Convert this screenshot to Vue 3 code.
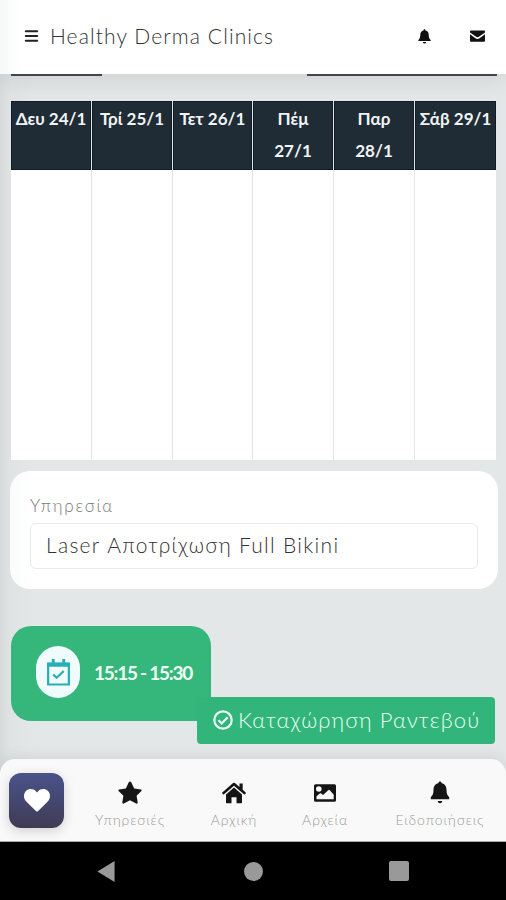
<script setup>
const days = ['Δευ 24/1', 'Τρί 25/1', 'Τετ 26/1', 'Πέμ 27/1', 'Παρ 28/1', 'Σάβ 29/1']
</script>

<template>
  <div class="screen">
    <header class="topbar">
      <svg class="menu" viewBox="0 0 13 13"><path d="M.8 1.2h11.4M.8 6h11.4M.8 10.800h11.4" /></svg>
      <h1>Healthy Derma Clinics</h1>
      <svg class="top-bell" viewBox="0 0 20 22"><path d="M10 0c1 0 1.500.7 1.500 1.700C15 2.500 16.500 5 16.500 8.500c0 4.500 1.500 6 3 8v1.500H.5v-1.500c1.500-2 3-3.500 3-8C3.500 5 5 2.500 8.500 1.700 8.500.7 9 0 10 0zM7.500 19.300h5c-.5 3.300-4.500 3.300-5 0z" /></svg>
      <svg class="mail" viewBox="0 0 16 12"><path d="M1 0h14Q16 0 16 1v1.200L9.500 6.800Q8 7.700 6.500 6.800L0 2.200V1Q0 0 1 0zM0 4.200l5.800 4.200q2.200 1.500 4.400 0L16 4.200V11q0 1-1 1H1Q0 12 0 11z" /></svg>
    </header>

    <main>
      <div class="rules"><i class="rule-left"></i><i class="rule-right"></i></div>

      <div class="calendar">
        <div v-for="day in days" :key="day" class="day">
          <div class="day-head"><span>{{ day }}</span></div>
        </div>
      </div>

      <section class="service">
        <label>Υπηρεσία</label>
        <div class="field">Laser Αποτρίχωση Full Bikini</div>
      </section>

      <section class="booking">
        <div class="slot">
          <span class="slot-icon">
            <svg viewBox="0 0 24 28"><path class="line" d="M1.200 5h21.600v21.500H1.200zM6.500 16l3.500 3.500 7.500-7" /><path class="solid" d="M0 4.500Q0 3.500 1 3.500h22q1 0 1 1V8H0zM5 0h3v5H5zM16 0h3v5h-3z" /></svg>
          </span>
          <span class="slot-time">15:15 - 15:30</span>
        </div>
        <button class="submit">
          <svg viewBox="0 0 20 20"><circle cx="10" cy="10" r="8.700" /><path d="M5.500 10.300l3.200 3.100 6-6.200" /></svg>
          <span>Καταχώρηση Ραντεβού</span>
        </button>
      </section>
    </main>

    <nav class="tabs">
      <div class="heart">
        <svg viewBox="0 0 26 23"><path d="M13 22.500q-.6 0-1.100-.5L2 12.200C-.7 9.400-.6 4.500 2 2c3-2.800 7.500-2.300 10 .4l1 1 1-1C16.500-.3 21-.8 24 2c2.600 2.500 2.700 7.400 0 10.200L14.100 22q-.5.500-1.100.5z" /></svg>
      </div>
      <div class="tab services">
        <svg viewBox="0 0 24 24"><path d="M12 .5q.8 0 1.200.8l3 6.100 6.600 1q1.600.4.600 1.700l-4.800 4.700 1.100 6.700q0 1.500-1.500 1L12 19.300l-6.200 3.200q-1.500.5-1.500-1l1.100-6.700L.6 10.100q-1-1.300.6-1.700l6.600-1 3-6.100q.4-.8 1.200-.8z" /></svg>
        <span>Υπηρεσιές</span>
      </div>
      <div class="tab home">
        <svg viewBox="0 0 24 22"><path d="M12 .8q.8 0 1.500.6L17.500 5V1.500h3.200v6.300l3 2.600q.5.500 0 1l-.8.900q-.5.500-1 0L12 3.700 2.100 12.300q-.5.500-1 0l-.8-.9q-.5-.5 0-1l10.200-9Q11.200.8 12 .8zM12 5.600l8 7V20.500q0 .8-.8.800H14.500v-6h-5v6H4.800q-.8 0-.8-.8v-7.900z" /></svg>
        <span>Αρχική</span>
      </div>
      <div class="tab files">
        <svg viewBox="0 0 24 24"><path fill-rule="evenodd" d="M2.500 3.200h19q1.500 0 1.500 1.600v14.400q0 1.600-1.500 1.600h-19Q1 20.800 1 19.200V4.800q0-1.600 1.500-1.600zM5.800 5.200a2.800 2.800 0 1 0 0 5.600 2.800 2.800 0 0 0 0-5.600zM3.500 18.200h17.200v-4.400l-3.900-4.600q-.8-.7-1.600 0l-5.100 4.900-2-1.700q-.7-.5-1.400 0l-3.200 2.900z" /></svg>
        <span>Αρχεία</span>
      </div>
      <div class="tab alerts">
        <svg viewBox="0 0 22 24"><path d="M11 .5c1 0 1.500.7 1.500 1.500 3.500.8 5 3.600 5 7.100 0 4 1 5.400 2.700 7.100v2H1.800v-2c1.700-1.700 2.700-3.100 2.700-7.100 0-3.500 1.500-6.300 5-7.100 0-.8.500-1.500 1.500-1.500zM8.700 20h4.600c-.5 3-4.100 3-4.600 0z" /></svg>
        <span>Ειδοποιήσεις</span>
      </div>
    </nav>

    <footer class="system">
      <svg class="back" viewBox="0 0 18 22"><path d="M18 0v22L0 11z" /></svg>
      <i class="circle"></i>
      <i class="square"></i>
    </footer>
  </div>
</template>

<style>
body { margin: 0; }
</style>

<style scoped>
* { box-sizing: border-box; }
.screen {
  width: 506px;
  height: 900px;
  display: flex;
  flex-direction: column;
  overflow: hidden;
  font-family: Lato, "Noto Sans", sans-serif;
  font-weight: 300;
  background: linear-gradient(90deg, #d5dada 0, #dfe3e3 10px, #e3e7e7 35px, #e3e7e7 100%);
}
svg { display: block; flex: none; overflow: visible; }
.topbar {
  height: 74px;
  flex: none;
  display: flex;
  align-items: center;
  padding: 0 21px 2px 25px;
  background: linear-gradient(90deg, #f7f8f8, #fff 20px);
  box-shadow: 0 2px 26px rgba(0, 0, 0, .12);
}
.menu { width: 13px; height: 13px; stroke: #222; stroke-width: 2; stroke-linecap: round; }
h1 { margin: 0 auto 0 12px; font-size: 21px; font-weight: 300; line-height: 30px; color: #333; letter-spacing: 1.1px; white-space: nowrap; }
.top-bell { width: 13px; height: 15px; margin-right: 39px; fill: #111; }
.mail { width: 15px; height: 12px; fill: #111; }
main { flex: 1; min-height: 0; padding: 0 8px 0 10px; }
.rules { display: flex; justify-content: space-between; height: 27px; padding: 0 1px; }
.rules i { height: 2px; background: #41464b; }
.rule-left { width: 91px; }
.rule-right { width: 190px; }
.calendar { width: 486px; height: 359px; margin-left: 1px; display: grid; grid-template-columns: 81px 81px 80px 81px 81px 82px; background: #fff; }
.day { border-right: 1px solid #e2e4e5; }
.day-head {
  height: 69px;
  padding-top: 1px;
  border: 1px solid #101c28;
  background: #1f2c36;
  color: #f1f4f5;
  display: flex;
  justify-content: center;
  font-size: 17px;
  font-weight: 700;
  line-height: 32px;
  text-align: center;
  white-space: nowrap;
}
.day:nth-child(4) span, .day:nth-child(5) span { width: 45px; white-space: normal; }
.service { height: 118px; margin-top: 11px; padding: 24px 20px 0; border-radius: 20px; background: linear-gradient(90deg, #fafbfb, #fff 20px); }
label { display: block; height: 28px; line-height: 22px; font-size: 17px; color: #777; letter-spacing: 1.800px; }
.field { height: 46px; padding-left: 15px; border: 1px solid #e7e9ea; border-radius: 6px; line-height: 42px; font-size: 21px; color: #333; letter-spacing: 1.300px; white-space: nowrap; }
.booking { margin-top: 37px; padding-left: 1px; display: flex; flex-direction: column; }
.slot { width: 200px; height: 95px; border-radius: 20px 20px 0 20px; background: #35b67b; display: flex; align-items: center; padding: 0 0 3px 25px; gap: 14px; }
.slot-icon { width: 44px; height: 52px; border-radius: 22px; background: #f0fcfb; display: grid; place-items: center; }
.slot-icon svg { width: 23px; height: 27px; }
.line { fill: none; stroke: #28afb5; stroke-width: 2.300; }
.solid { fill: #28afb5; }
.slot-time { color: #effff6; font-size: 19px; font-weight: 700; letter-spacing: -1.250px; white-space: nowrap; }
.submit { align-self: flex-end; width: 298px; height: 47px; margin: -24px 3px 0 0; padding: 0 0 2px 16px; border: 0; border-radius: 4px; background: #32b57a; color: #eafff5; display: flex; align-items: center; gap: 5px; font-family: inherit; font-weight: 300; font-size: 22px; letter-spacing: 1.100px; white-space: nowrap; }
.submit svg { width: 20px; height: 20px; fill: none; stroke: #eafff5; stroke-width: 2.200; }
.tabs { position: relative; height: 83px; flex: none; border-radius: 15px 15px 0 0; border-bottom: 1px solid #aaa; background: #f9f9f9; box-shadow: 0 -1px 15px rgba(0, 0, 0, .09); display: flex; align-items: flex-start; padding: 14px 0 0 9px; }
.heart { width: 55px; height: 55px; border-radius: 12px; background: linear-gradient(#49538a, #3f3b55); box-shadow: 0 3px 12px rgba(0, 0, 0, .17); display: grid; place-items: center; }
.heart svg { width: 26px; height: 23px; fill: #fff; }
.tab { display: flex; flex-direction: column; align-items: center; padding-top: 8px; gap: 5px; color: #999; font-size: 14px; line-height: 19px; letter-spacing: .9px; white-space: nowrap; }
.tab svg { width: 24px; height: 24px; fill: #151515; }
.services { width: 82px; margin-left: 25px; }
.home { width: 60px; margin-left: 33px; }
.files { width: 60px; margin-left: 31px; }
.alerts { width: 100px; margin-left: 35px; }
.system { height: 58px; flex: none; display: flex; align-items: center; padding-left: 97px; background: #000; }
.back { width: 18px; height: 21px; fill: #999; }
.circle { width: 19px; height: 19px; margin-left: 129px; border-radius: 50%; background: #999; }
.square { width: 20px; height: 20px; margin-left: 126px; border-radius: 2px; background: #999; }
</style>
